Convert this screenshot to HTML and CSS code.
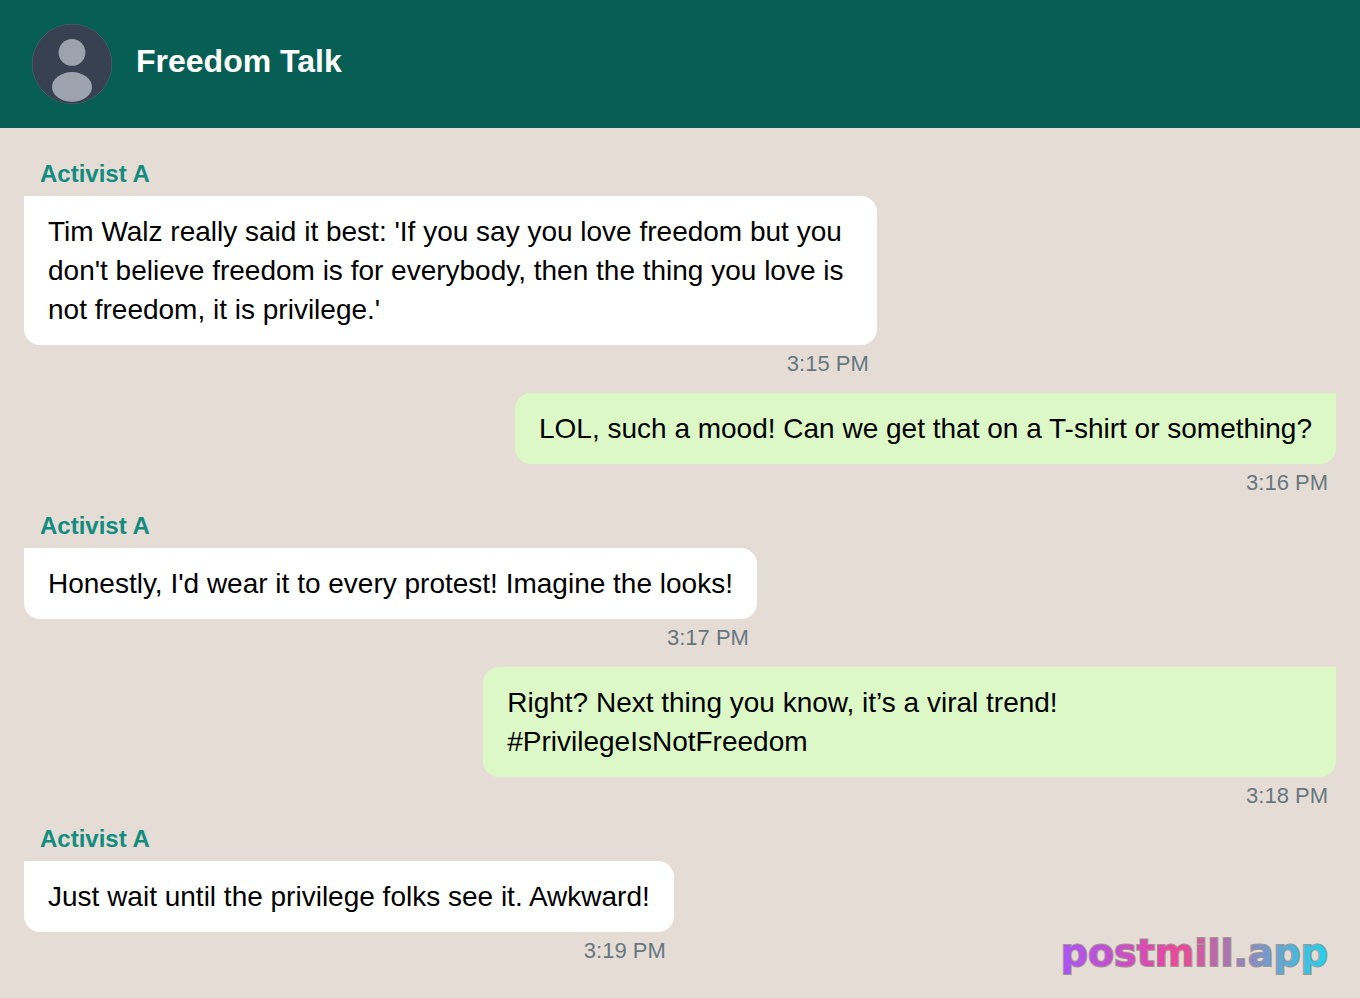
FILE: index.html
```html
<!DOCTYPE html>
<html lang="en">
<head>
  <meta charset="utf-8">
  <meta name="viewport" content="width=device-width, initial-scale=1">
  <title>Freedom Talk</title>
  <link rel="stylesheet" href="styles.css">
</head>
<body>
  <header class="chat-header">
    <svg class="avatar" viewBox="0 0 80 80" aria-hidden="true">
      <circle cx="40" cy="40" r="40" fill="#6b7280"/>
      <circle cx="40" cy="40" r="39.7" fill="#374151"/>
      <circle cx="40" cy="28.4" r="13.4" fill="#9ca3af"/>
      <ellipse cx="40" cy="63" rx="20" ry="15" fill="#9ca3af"/>
    </svg>
    <h1 class="chat-title">Freedom Talk</h1>
  </header>

  <main class="messages">
    <div class="message received">
      <div class="sender">Activist A</div>
      <p class="bubble">Tim Walz really said it best: 'If you say you love freedom but you don't believe freedom is for everybody, then the thing you love is not freedom, it is privilege.'</p>
      <time class="time">3:15 PM</time>
    </div>

    <div class="message sent">
      <p class="bubble">LOL, such a mood! Can we get that on a T-shirt or something?</p>
      <time class="time">3:16 PM</time>
    </div>

    <div class="message received">
      <div class="sender">Activist A</div>
      <p class="bubble">Honestly, I'd wear it to every protest! Imagine the looks!</p>
      <time class="time">3:17 PM</time>
    </div>

    <div class="message sent">
      <p class="bubble">Right? Next thing you know, it’s a viral trend! #PrivilegeIsNotFreedom</p>
      <time class="time">3:18 PM</time>
    </div>

    <div class="message received">
      <div class="sender">Activist A</div>
      <p class="bubble">Just wait until the privilege folks see it. Awkward!</p>
      <time class="time">3:19 PM</time>
    </div>
  </main>

  <!-- watermark -->
  <svg class="watermark" width="272" height="46">
    <defs>
      <linearGradient id="brand">
        <stop offset="0" stop-color="#a855f7"/>
        <stop offset="0.45" stop-color="#ec4899"/>
        <stop offset="1" stop-color="#22d3ee"/>
      </linearGradient>
    </defs>
    <text x="272" y="36" text-anchor="end" fill="url(#brand)">postmill.app</text>
  </svg>
</body>
</html>
```

FILE: styles.css
```css
* {
  box-sizing: border-box;
}

body {
  margin: 0;
  position: relative;
  min-height: 100vh;
  background-color: #e5ddd5;
  font-family: "Liberation Sans", Arial, sans-serif;
  color: #000;
}

.chat-header {
  display: flex;
  align-items: center;
  gap: 24px;
  padding: 24px 32px;
  background-color: #075e54;
}

.avatar {
  width: 80px;
  height: 80px;
}

.chat-title {
  margin: 0 0 6px;
  font-size: 32px;
  line-height: 36px;
  color: #fff;
}

.messages {
  display: flex;
  flex-direction: column;
  gap: 16px;
  padding: 32px 24px;
}

.message {
  display: flex;
  flex-direction: column;
  max-width: 65%;
}

.received {
  align-self: flex-start;
}

.sent {
  align-self: flex-end;
}

.sender {
  margin: 0 16px 8px;
  font-size: 24px;
  font-weight: bold;
  line-height: 28px;
  color: #128c7e;
}

.bubble {
  margin: 0;
  padding: 16px 24px;
  border-radius: 16px;
  font-size: 28px;
  line-height: 39px;
}

.received .bubble {
  background-color: #fff;
  border-top-left-radius: 0;
}

.sent .bubble {
  background-color: #dcf8c6;
  border-top-right-radius: 0;
}

.time {
  align-self: flex-end;
  margin: 6px 8px 0;
  font-size: 22px;
  line-height: 26px;
  color: #667781;
}

.watermark {
  position: absolute;
  right: 32px;
  bottom: 22px;
  overflow: visible;
  font-family: "DejaVu Sans", sans-serif;
  font-size: 38px;
  font-weight: bold;
  stroke: #a0988f;
  stroke-width: 2px;
  paint-order: stroke;
}
```
